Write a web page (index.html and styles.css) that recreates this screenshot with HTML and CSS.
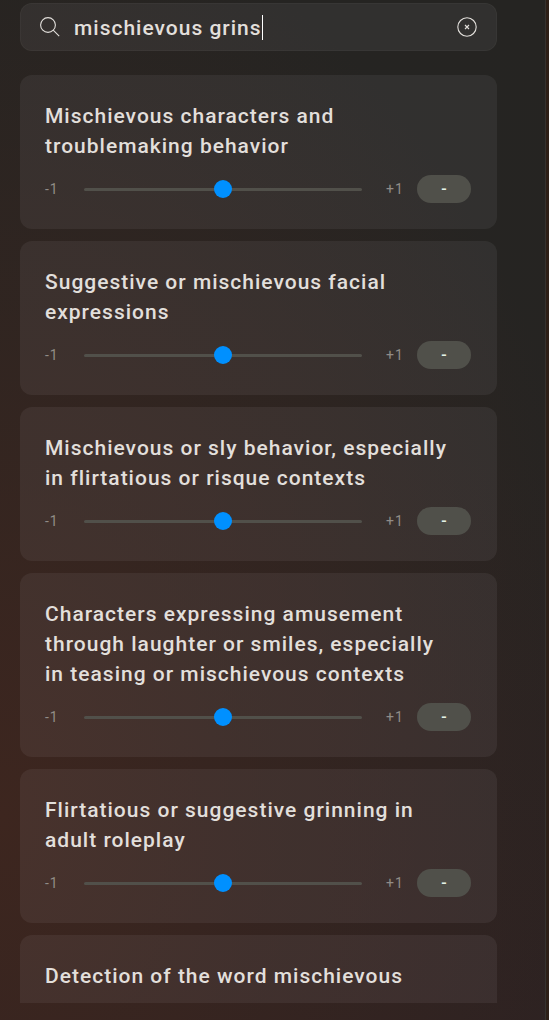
FILE: index.html
```html
<!DOCTYPE html>
<html lang="en">
	<head>
		<meta charset="utf-8">
		<meta name="viewport" content="width=device-width, initial-scale=1">
		<title>Feature search</title>
		<link rel="stylesheet" href="styles.css">
	</head>
	<body>
		<main class="panel">
			<form class="search" role="search">
				<svg class="search-icon" viewBox="0 0 20 20" aria-hidden="true">
					<circle cx="8" cy="8" r="7.4" />
					<path d="M13.2 13.2L19.2 19.2" />
				</svg>
				<div class="search-field">
					<input class="search-input" type="text" size="14" value="mischievous grins" aria-label="Search features">
					<span class="caret"></span>
				</div>
				<button class="clear" type="reset" aria-label="Clear search">
					<svg viewBox="0 0 20 20" aria-hidden="true">
						<circle cx="10" cy="10" r="9.2" />
						<path d="M8 8L12 12M12 8L8 12" />
					</svg>
				</button>
			</form>
			<ul class="list">
				<li class="card">
					<label class="title" for="f1">Mischievous characters and troublemaking behavior</label>
					<div class="row">
						<span class="min">-1</span>
						<input class="slider" id="f1" type="range" min="-1" max="1" step="0.1" value="0">
						<span class="max">+1</span>
						<button class="value" type="button">-</button>
					</div>
				</li>
				<li class="card">
					<label class="title" for="f2">Suggestive or mischievous facial expressions</label>
					<div class="row">
						<span class="min">-1</span>
						<input class="slider" id="f2" type="range" min="-1" max="1" step="0.1" value="0">
						<span class="max">+1</span>
						<button class="value" type="button">-</button>
					</div>
				</li>
				<li class="card">
					<label class="title" for="f3">Mischievous or sly behavior, especially in flirtatious or risque contexts</label>
					<div class="row">
						<span class="min">-1</span>
						<input class="slider" id="f3" type="range" min="-1" max="1" step="0.1" value="0">
						<span class="max">+1</span>
						<button class="value" type="button">-</button>
					</div>
				</li>
				<li class="card">
					<label class="title" for="f4">Characters expressing amusement through laughter or smiles, especially in teasing or mischievous contexts</label>
					<div class="row">
						<span class="min">-1</span>
						<input class="slider" id="f4" type="range" min="-1" max="1" step="0.1" value="0">
						<span class="max">+1</span>
						<button class="value" type="button">-</button>
					</div>
				</li>
				<li class="card">
					<label class="title" for="f5">Flirtatious or suggestive grinning in adult roleplay</label>
					<div class="row">
						<span class="min">-1</span>
						<input class="slider" id="f5" type="range" min="-1" max="1" step="0.1" value="0">
						<span class="max">+1</span>
						<button class="value" type="button">-</button>
					</div>
				</li>
				<li class="card">
					<span class="title">Detection of the word mischievous</span>
				</li>
			</ul>
		</main>
	</body>
</html>
```
FILE: styles.css
```css
* {
	box-sizing: border-box;
}

body {
	margin: 0;
	padding-right: 3px;
	background: #2d1f17;
	color: #e2dfdb;
	font-family: Roboto, "Liberation Sans", sans-serif;
	letter-spacing: 1px;
}

.panel {
	display: flex;
	flex-direction: column;
	gap: 24px;
	height: 100vh;
	padding: 3px 48px 17px 20px;
	border-right: 1px solid #35322f;
	background:
		radial-gradient(ellipse 115% 90% at 0% 80%, #3d261f 0%, rgba(61, 38, 31, 0) 100%),
		linear-gradient(to bottom, #252422 0%, #262422 45%, #2c2222 100%);
}

.search {
	display: flex;
	flex: none;
	align-items: center;
	height: 48px;
	padding: 0 19px;
	border: 1px solid rgba(255, 255, 255, 0.03);
	border-radius: 12px;
	background: rgba(255, 255, 255, 0.06);
}

.search-icon,
.clear svg {
	display: block;
	width: 20px;
	height: 20px;
	fill: none;
	stroke: #e2dfdb;
	stroke-width: 1.1;
}

.search-field {
	display: flex;
	flex: 1;
	align-items: center;
	margin-left: 14px;
}

.search-input {
	padding: 1px 0 0;
	border: 0;
	outline: none;
	background: none;
	color: inherit;
	font: 500 21px/30px Roboto, "Liberation Sans", sans-serif;
	letter-spacing: inherit;
	field-sizing: content;
}

.caret {
	width: 1px;
	height: 25px;
	background: #fff;
}

.clear {
	padding: 0;
	border: 0;
	background: none;
}

.list {
	display: flex;
	flex: 1;
	flex-direction: column;
	gap: 12px;
	min-height: 0;
	margin: 0;
	padding: 0;
	overflow: hidden;
	list-style: none;
}

.card {
	flex: none;
	padding: 26px 26px 26px 25px;
	border-radius: 12px;
	background: rgba(255, 255, 255, 0.06);
}

.title {
	display: block;
	padding-right: 16px;
	font-size: 21px;
	font-weight: 500;
	line-height: 30px;
}

.row {
	display: grid;
	grid-template-columns: 39px 1fr 55px 54px;
	align-items: center;
	margin-top: 14px;
}

.min,
.max {
	color: #918c87;
	font-size: 14px;
	line-height: 20px;
}

.max {
	padding-left: 24px;
}

.slider {
	width: 100%;
	height: 18px;
	margin: 0;
	background: none;
	appearance: none;
}

.slider::-webkit-slider-runnable-track {
	height: 3px;
	border-radius: 2px;
	background: #51504a;
}

.slider::-webkit-slider-thumb {
	width: 18px;
	height: 18px;
	margin-top: -8px;
	border-radius: 50%;
	background: #0090ff;
	appearance: none;
}

.value {
	height: 28px;
	padding: 0;
	border: 0;
	border-radius: 14px;
	background: #50504a;
	color: #e4f2e6;
	font: 500 16px/28px Roboto, "Liberation Sans", sans-serif;
}
```
